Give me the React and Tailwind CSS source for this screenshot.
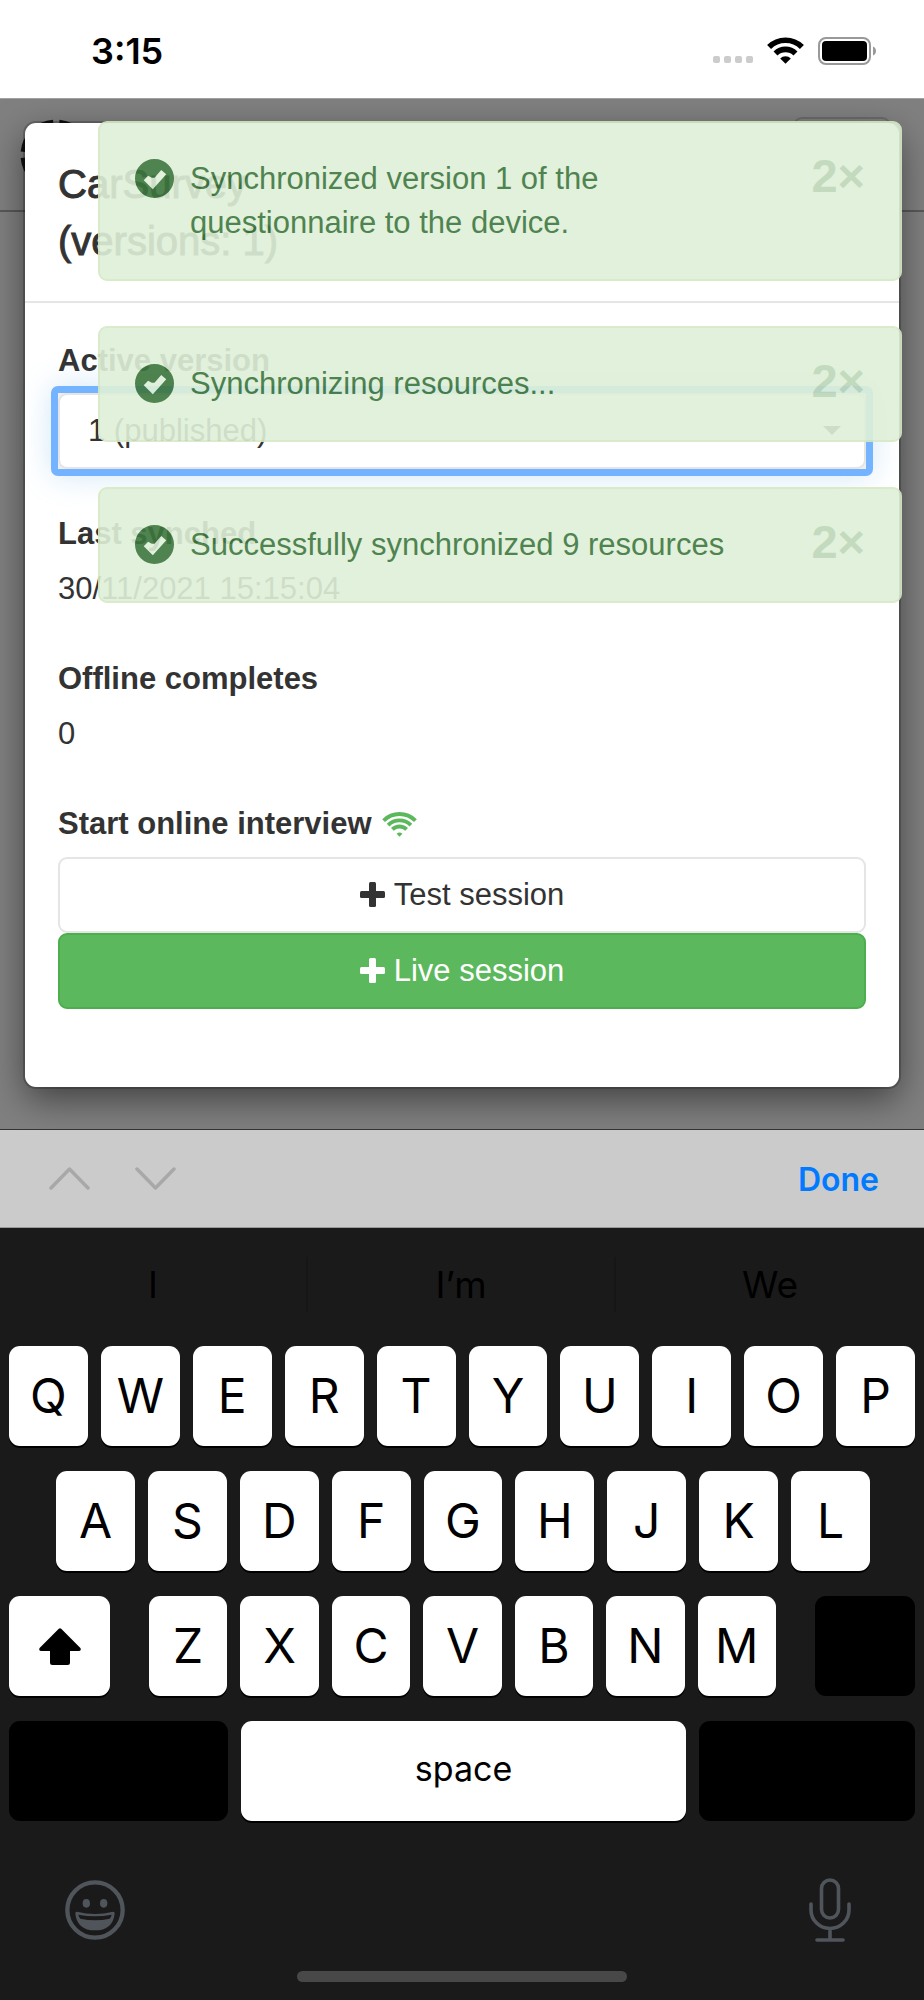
import { useState } from 'react';

const toasts = [
  { id: 1, text: 'Synchronized version 1 of the questionnaire to the device.' },
  { id: 2, text: 'Synchronizing resources...' },
  { id: 3, text: 'Successfully synchronized 9 resources' }
];

const suggestions = ['I', 'I’m', 'We'];

function WifiIcon() {
  return (
    <svg viewBox="0 0 37 27" className="h-[27px] w-[37px]" fill="none" stroke="black" strokeWidth="5.600">
      <path d="M2.100 10.100a23.200 23.200 0 0 1 32.800 0" />
      <path d="M8.500 16.500a14.200 14.200 0 0 1 20 0" />
      <path d="M18.500 26.800l-5.300-5.400a7.500 7.500 0 0 1 10.600 0z" fill="black" stroke="none" />
    </svg>
  );
}

function OnlineIcon() {
  return (
    <svg viewBox="0 0 35 25" className="h-[25px] w-[35px]" fill="none" stroke="#5cb85c" strokeWidth="3.900">
      <path d="M1.600 8.600a22.500 22.500 0 0 1 31.800 0" />
      <path d="M6.100 13.100a16.200 16.200 0 0 1 22.800 0" />
      <path d="M10.400 17.400a10 10 0 0 1 14.200 0" />
      <path d="M17.500 24.800l-2.900-3a4.200 4.200 0 0 1 5.800 0z" fill="#5cb85c" stroke="none" />
    </svg>
  );
}

function BatteryIcon() {
  return (
    <svg viewBox="0 0 59 28" className="h-7 w-[59px]">
      <rect x="1" y="1" width="51" height="26" rx="7" fill="none" stroke="#999" strokeWidth="2" />
      <rect x="4" y="4" width="45" height="20" rx="4" fill="black" />
      <path d="M55 9.500c4 1.600 4 7.400 0 9z" fill="#999" />
    </svg>
  );
}

function OkSign() {
  return (
    <svg viewBox="0 0 116 116" className="mt-[2px] h-[39px] w-[39px] shrink-0">
      <path
        fillRule="evenodd"
        fill="currentColor"
        d="M58 0a58 58 0 1 1 0 116a58 58 0 1 1 0-116zM26 63L53 90L93 45L78 33L58 56L50 56L39 50z"
      />
    </svg>
  );
}

function PlusIcon() {
  return (
    <svg viewBox="0 0 25 25" className="mb-[2px] h-[25px] w-[25px]" fill="currentColor">
      <rect x="9" y="0" width="7" height="25" rx="1.500" />
      <rect x="0" y="9" width="25" height="7" rx="1.500" />
    </svg>
  );
}

function StatusBar() {
  return (
    <div className="flex h-[98px] items-center justify-between bg-white pt-[3px] pr-[47px] pl-[91px]">
      <span className="font-['Inter',sans-serif] text-[36px] leading-none font-semibold text-black">3:15</span>
      <div className="flex items-center">
        <div className="mr-[14px] flex gap-[4px] pt-[18px]">
          {[0, 1, 2, 3].map((dot) => (
            <span key={dot} className="h-[7px] w-[7px] rounded-[2px] bg-[#ccc]" />
          ))}
        </div>
        <WifiIcon />
        <div className="ml-[14px]">
          <BatteryIcon />
        </div>
      </div>
    </div>
  );
}

function Toast({ text }) {
  return (
    <div
      role="status"
      className="flex rounded-[9px] border-2 border-[#d6e9c6] bg-[#dff0d8] px-[35px] py-[34px] text-[#3c763d] opacity-90"
    >
      <OkSign />
      <p className="ml-[16px] max-w-[560px] grow text-[31px] leading-[44px]">{text}</p>
      <button
        type="button"
        aria-label="Close"
        className="ml-auto h-[36px] self-start text-[47px] leading-[38px] font-bold opacity-20"
      >
        2×
      </button>
    </div>
  );
}

function Field({ label, children }) {
  return (
    <dl className="mb-[46px]">
      <dt className="mb-[11px] font-bold">{label}</dt>
      <dd>{children}</dd>
    </dl>
  );
}

function SurveyDialog() {
  const [version, setVersion] = useState('1');

  return (
    <section
      role="dialog"
      aria-labelledby="survey-title"
      className="relative rounded-[11px] bg-white text-[31px] leading-[44px] text-[#333] shadow-[0_0_0_2px_rgba(0,0,0,0.2),0_12px_36px_rgba(0,0,0,0.5)]"
    >
      <header className="border-b-2 border-[#e5e5e5] px-[33px] pt-[33px] pb-[31px]">
        <h1 id="survey-title" className="text-[40px] leading-[57px] [-webkit-text-stroke:1px_#333]">
          CarSurvey
          <br />
          (versions: 1)
        </h1>
      </header>
      <div className="px-[33px] pt-[36px] pb-[78px]">
        <label htmlFor="version" className="mb-[3px] block font-bold">
          Active version
        </label>
        {/* focus ring: rounded outside, square inside */}
        <div className="relative -mx-[7px] mb-[36px] rounded-[7px] border-7 border-[#74b3ff] bg-[#eee] shadow-[0_0_30px_rgba(102,175,233,0.3)]">
          <select
            id="version"
            value={version}
            onChange={(e) => setVersion(e.target.value)}
            className="block h-[76px] w-full appearance-none rounded-[9px] border-2 border-[#e5e5e5] bg-white px-[28px] outline-none"
          >
            <option value="1">1 (published)</option>
          </select>
          <svg viewBox="0 0 18 9" className="pointer-events-none absolute top-[33px] right-[25px] h-[9px] w-[18px]">
            <path d="M0 0h18l-9 9z" fill="#333" />
          </svg>
        </div>
        <Field label="Last synched">30/11/2021 15:15:04</Field>
        <Field label="Offline completes">0</Field>
        <h2 className="mb-[11px] flex items-center gap-[10px] font-bold">
          Start online interview
          <OnlineIcon />
        </h2>
        <button
          type="button"
          className="flex h-[76px] w-full items-center justify-center gap-[9px] rounded-[9px] border-2 border-[#e5e5e5] bg-white"
        >
          <PlusIcon />
          Test session
        </button>
        <button
          type="button"
          className="flex h-[76px] w-full items-center justify-center gap-[9px] rounded-[9px] border-2 border-[#4cae4c] bg-[#5cb85c] text-white"
        >
          <PlusIcon />
          Live session
        </button>
      </div>
    </section>
  );
}

function Key({ children, label, className = 'flex-1' }) {
  return (
    <button
      type="button"
      aria-label={label}
      className={`flex h-[100px] items-center justify-center rounded-[11px] bg-white text-black shadow-[0_2px_0_#000] ${className}`}
    >
      {children}
    </button>
  );
}

function Letters({ row }) {
  return row.split('').map((letter) => <Key key={letter}>{letter}</Key>);
}

function Keyboard() {
  return (
    <div className="flex grow flex-col bg-[#1a1a1a] font-['Inter',sans-serif]">
      <div className="grid grid-cols-3 pt-[29px] pb-[34px]">
        {suggestions.map((word, i) => (
          <button
            key={word}
            type="button"
            className={`h-[55px] text-[37px] leading-[55px] text-black ${i < 2 ? 'border-r-2 border-[#161616]' : ''}`}
          >
            {word}
          </button>
        ))}
      </div>
      <div className="flex flex-col gap-[25px] px-[9px] text-[48px] leading-none">
        <div className="flex gap-[13px]">
          <Letters row="QWERTYUIOP" />
        </div>
        <div className="flex gap-[13px] pr-[45px] pl-[47px]">
          <Letters row="ASDFGHJKL" />
        </div>
        <div className="flex gap-[39px]">
          <Key label="Shift" className="w-[101px]">
            <svg viewBox="0 0 42 37" className="h-[37px] w-[42px]">
              <path d="M19.800 .8q1.200-1.100 2.400 0l19.200 19.200q1.200 2.800-1.300 3h-9.100v11.500q0 2.500-2.500 2.500h-15q-2.500 0-2.500-2.500v-11.500h-9.100q-2.500-.2-1.300-3z" />
            </svg>
          </Key>
          <div className="flex grow gap-[13px]">
            <Letters row="ZXCVBNM" />
          </div>
          <button type="button" aria-label="Delete" className="h-[100px] w-[100px] rounded-[11px] bg-black" />
        </div>
        <div className="flex gap-[13px]">
          <button type="button" aria-label="Numbers" className="h-[100px] w-[219px] rounded-[11px] bg-black" />
          <Key className="flex-1 pb-[5px] text-[34px]">space</Key>
          <button type="button" aria-label="Return" className="h-[100px] w-[216px] rounded-[11px] bg-black" />
        </div>
      </div>
      <div className="flex items-center justify-between px-[65px] pt-[57px] text-[#50555c]">
        <button type="button" aria-label="Emoji">
          <svg viewBox="0 0 180 180" className="h-[60px] w-[60px]" fill="currentColor">
            <circle cx="90" cy="90" r="83" fill="none" stroke="currentColor" strokeWidth="13" />
            <ellipse cx="64" cy="70" rx="11" ry="13" />
            <ellipse cx="116" cy="70" rx="11" ry="13" />
            <path
              fillRule="evenodd"
              d="M36 95q54 14 108 0q6 0 5 6q-6 50-59 50q-53 0-59-50q-1-6 5-6zM40 104q2 8 6 12q44 10 88 0q4-4 6-12q-50 10-100 0z"
            />
          </svg>
        </button>
        <button type="button" aria-label="Dictate" className="mr-[8px]">
          <svg
            viewBox="0 0 42 64"
            className="h-16 w-[42px]"
            fill="none"
            stroke="currentColor"
            strokeWidth="3.600"
            strokeLinecap="round"
          >
            <rect x="12.500" y="2" width="17" height="38" rx="8.500" />
            <path d="M2 26v6a19 18.500 0 0 0 38 0v-6M21 51v11M8 62h26" />
          </svg>
        </button>
      </div>
      <div className="mx-auto mt-auto mb-[18px] h-[11px] w-[330px] rounded-full bg-[#484848]" />
    </div>
  );
}

export default function App() {
  return (
    <div className="flex min-h-screen flex-col font-['Liberation_Sans',Arial,sans-serif]">
      <StatusBar />
      <main className="relative overflow-hidden border-t border-[#a0a0a0] bg-[#808080] px-[25px] pt-[24px] pb-[42px]">
        {/* dimmed page header behind the dialog */}
        <div className="absolute inset-x-0 top-0 flex h-[113px] items-start justify-between border-b-2 border-[#595959] px-[20px] pt-[20px]">
          <svg viewBox="0 0 72 72" className="h-[72px] w-[72px]" fill="none" stroke="#111" strokeWidth="7">
            <circle cx="36" cy="36" r="32" strokeDasharray="44.265 6" strokeDashoffset="-3" />
          </svg>
          <span className="mt-[-2px] mr-[13px] h-[72px] w-[98px] rounded-[9px] border-2 border-[#6b6b6b]" />
        </div>
        <SurveyDialog />
        <div className="absolute top-[22px] right-[22px] left-[98px] flex flex-col gap-[45px]">
          {toasts.map((toast) => (
            <Toast key={toast.id} text={toast.text} />
          ))}
        </div>
      </main>
      <div className="flex h-[99px] items-center justify-between border-t border-b border-t-[#333] border-b-[#999] bg-[#cbcbcb] pr-[45px] pl-[49px]">
        <div className="flex gap-[45px]">
          <button type="button" aria-label="Previous field">
            <svg viewBox="0 0 41 23" className="h-[23px] w-[41px]" fill="none" stroke="#a8a8a8" strokeWidth="3.500" strokeLinecap="round" strokeLinejoin="round">
              <path d="M2 21l18.500-19l18.500 19" />
            </svg>
          </button>
          <button type="button" aria-label="Next field">
            <svg viewBox="0 0 41 23" className="h-[23px] w-[41px]" fill="none" stroke="#a8a8a8" strokeWidth="3.500" strokeLinecap="round" strokeLinejoin="round">
              <path d="M2 2l18.500 19l18.500-19" />
            </svg>
          </button>
        </div>
        <button type="button" className="pt-[2px] font-['Inter',sans-serif] text-[32px] leading-none font-semibold text-[#007aff]">
          Done
        </button>
      </div>
      <Keyboard />
    </div>
  );
}
